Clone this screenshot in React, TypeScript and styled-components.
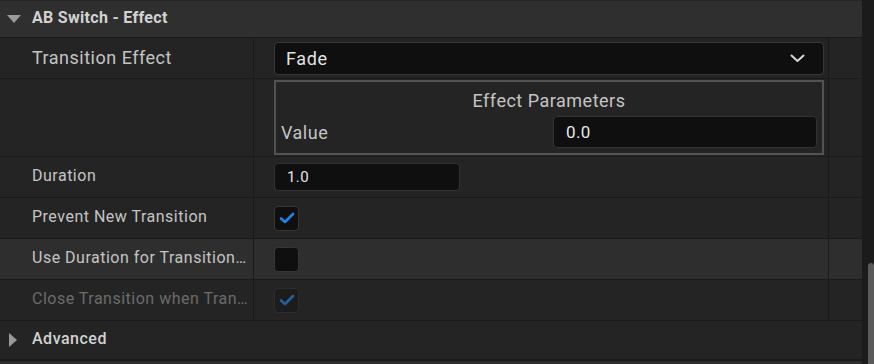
import React from 'react'
import styled, { createGlobalStyle } from 'styled-components'

const GlobalStyle = createGlobalStyle`
  html, body {
    margin: 0;
    padding: 0;
    background: #1b1b1b;
    font-family: Roboto, 'Liberation Sans', sans-serif;
  }
`

interface BoolProp {
  label: string
  checked: boolean
  disabled?: boolean
  hovered?: boolean
}

const boolProps: BoolProp[] = [
  { label: 'Prevent New Transition', checked: true },
  { label: 'Use Duration for Transition…', checked: false, hovered: true },
  { label: 'Close Transition when Tran…', checked: true, disabled: true },
]

const DownTriangle = () => (
  <svg width="14" height="9" viewBox="0 0 14 9">
    <path d="M0 0 L14 0 L7 8 Z" fill="#9a9a9a" />
  </svg>
)

const RightTriangle = () => (
  <svg width="9" height="14" viewBox="0 0 9 14">
    <path d="M0 0 L8 7 L0 14 Z" fill="#9a9a9a" />
  </svg>
)

const Chevron = () => (
  <svg width="15" height="9" viewBox="0 0 15 9">
    <path d="M1.5 1.5 L7.5 7 L13.5 1.5" stroke="#d8d8d8" strokeWidth="2" fill="none" strokeLinecap="round" strokeLinejoin="round" />
  </svg>
)

const Check = ({ dim }: { dim?: boolean }) => (
  <svg width="16" height="12" viewBox="0 0 16 12">
    <path
      d="M2 6.5 L6 10 L14 2"
      stroke={dim ? '#265f9c' : '#1f83ea'}
      strokeWidth="2.6"
      fill="none"
      strokeLinecap="round"
      strokeLinejoin="round"
    />
  </svg>
)

const App: React.FC = () => {
  return (
    <>
      <GlobalStyle />
      <Page>
        <Panel>
          <CategoryHeader>
            <Arrow>
              <DownTriangle />
            </Arrow>
            <CategoryTitle>AB Switch - Effect</CategoryTitle>
          </CategoryHeader>

          <Row $height={40}>
            <NameCell $lift={1}>
              <BigLabel>Transition Effect</BigLabel>
            </NameCell>
            <ValueCell>
              <Dropdown>
                <span>Fade</span>
                <Chevron />
              </Dropdown>
            </ValueCell>
            <ExtraCell />
          </Row>

          <Row $height={77}>
            <NameCell />
            <ValueCell>
              <ParamsBox>
                <ParamsTitle>Effect Parameters</ParamsTitle>
                <ParamsRow>
                  <ParamsLabel>Value</ParamsLabel>
                  <NumberInput $width={264} $height={32} $size={17}>
                    0.0
                  </NumberInput>
                </ParamsRow>
              </ParamsBox>
            </ValueCell>
            <ExtraCell />
          </Row>

          <Row $height={40}>
            <NameCell>
              <Label>Duration</Label>
            </NameCell>
            <ValueCell>
              <NumberInput $width={186} $height={28} $size={15}>
                1.0
              </NumberInput>
            </ValueCell>
            <ExtraCell />
          </Row>

          {boolProps.map((p) => (
            <Row key={p.label} $height={40} $hovered={p.hovered}>
              <NameCell>
                <Label $disabled={p.disabled}>{p.label}</Label>
              </NameCell>
              <ValueCell>
                <CheckBox $disabled={p.disabled}>{p.checked && <Check dim={p.disabled} />}</CheckBox>
              </ValueCell>
              <ExtraCell />
            </Row>
          ))}

          <SubHeader>
            <Arrow $small>
              <RightTriangle />
            </Arrow>
            <CategoryTitle $light>Advanced</CategoryTitle>
          </SubHeader>
          <Footer />
        </Panel>
        <ScrollTrack>
          <ScrollThumb />
        </ScrollTrack>
      </Page>
    </>
  )
}

export default App

const Page = styled.div`
  display: flex;
  width: 874px;
  height: 364px;
  overflow: hidden;
  background: #1b1b1b;
`

const Panel = styled.div`
  flex: 1;
  display: flex;
  flex-direction: column;
  gap: 1px;
  background: #1a1a1a;
`

const CategoryHeader = styled.div`
  height: 37px;
  flex-shrink: 0;
  display: flex;
  align-items: center;
  background: #2f2f2f;
  border-top: 1px solid #262626;
  box-sizing: border-box;
`

const SubHeader = styled.div`
  height: 38px;
  flex-shrink: 0;
  display: flex;
  align-items: center;
  background: #242424;
`

const Arrow = styled.div<{ $small?: boolean }>`
  width: 32px;
  display: flex;
  justify-content: flex-start;
  padding-left: ${(p) => (p.$small ? '9px' : '7px')};
  box-sizing: border-box;
`

const CategoryTitle = styled.div<{ $light?: boolean }>`
  font-size: 16px;
  font-weight: ${(p) => (p.$light ? 500 : 700)};
  letter-spacing: ${(p) => (p.$light ? '0.5px' : '0.3px')};
  color: #d2d2d2;
  padding-bottom: ${(p) => (p.$light ? '3px' : '3px')};
`

const Row = styled.div<{ $height: number; $hovered?: boolean }>`
  height: ${(p) => p.$height}px;
  flex-shrink: 0;
  display: grid;
  grid-template-columns: 253px 574px 1fr;
  column-gap: 1px;

  & > div {
    background: ${(p) => (p.$hovered ? '#2e2e2e' : '#242424')};
  }
`

const NameCell = styled.div<{ $lift?: number }>`
  display: flex;
  align-items: center;
  padding-left: 32px;
  padding-bottom: ${(p) => p.$lift ?? 3}px;
  overflow: hidden;
`

const ValueCell = styled.div`
  display: flex;
  align-items: center;
  padding: 0 4px 0 20px;
`

const ExtraCell = styled.div``

const Label = styled.span<{ $disabled?: boolean }>`
  font-size: 16px;
  letter-spacing: 0.5px;
  color: ${(p) => (p.$disabled ? '#6b6b6b' : '#c4c4c4')};
  white-space: nowrap;
`

const BigLabel = styled.span`
  font-size: 18px;
  letter-spacing: 0.5px;
  color: #c4c4c4;
  white-space: nowrap;
`

const Dropdown = styled.div`
  flex: 1;
  height: 31px;
  display: flex;
  align-items: center;
  justify-content: space-between;
  padding: 0 18px 0 11px;
  background: #0f0f0f;
  border: 1px solid #373737;
  border-radius: 4px;
  font-size: 18px;
  letter-spacing: 0.6px;
  color: #e2e2e2;
`

const ParamsBox = styled.div`
  flex: 1;
  height: 75px;
  box-sizing: border-box;
  border: 2px solid #525252;
  background: #242424;
  display: flex;
  flex-direction: column;
  padding: 9px 5px 5px 5px;
`

const ParamsTitle = styled.div`
  text-align: center;
  font-size: 18px;
  letter-spacing: 0.5px;
  color: #c4c4c4;
  line-height: 20px;
`

const ParamsRow = styled.div`
  display: flex;
  align-items: center;
  justify-content: space-between;
  margin-top: 5px;
`

const ParamsLabel = styled.span`
  font-size: 18px;
  letter-spacing: 0.5px;
  color: #c4c4c4;
`

const NumberInput = styled.div<{ $width: number; $height: number; $size: number }>`
  width: ${(p) => p.$width}px;
  height: ${(p) => p.$height}px;
  box-sizing: border-box;
  display: flex;
  align-items: center;
  padding-left: 12px;
  background: #0f0f0f;
  border: 1px solid #333333;
  border-radius: 4px;
  font-size: ${(p) => p.$size}px;
  letter-spacing: 0.4px;
  color: #e6e6e6;
`

const CheckBox = styled.div<{ $disabled?: boolean }>`
  width: 25px;
  height: 25px;
  box-sizing: border-box;
  display: flex;
  align-items: center;
  justify-content: center;
  background: ${(p) => (p.$disabled ? '#1c1c1c' : '#0f0f0f')};
  border: 1px solid ${(p) => (p.$disabled ? '#2c2c2c' : '#363636')};
  border-radius: 4px;
`

const Footer = styled.div`
  flex: 1;
  background: #2c2c2c;
  border-top: 1px solid #1a1a1a;
`

const ScrollTrack = styled.div`
  width: 12px;
  display: flex;
  justify-content: flex-end;
  background: #1b1b1b;
`

const ScrollThumb = styled.div`
  width: 6px;
  height: 101px;
  margin-top: 263px;
  background: #5a5a5a;
  border-radius: 3px 3px 0 0;
`
